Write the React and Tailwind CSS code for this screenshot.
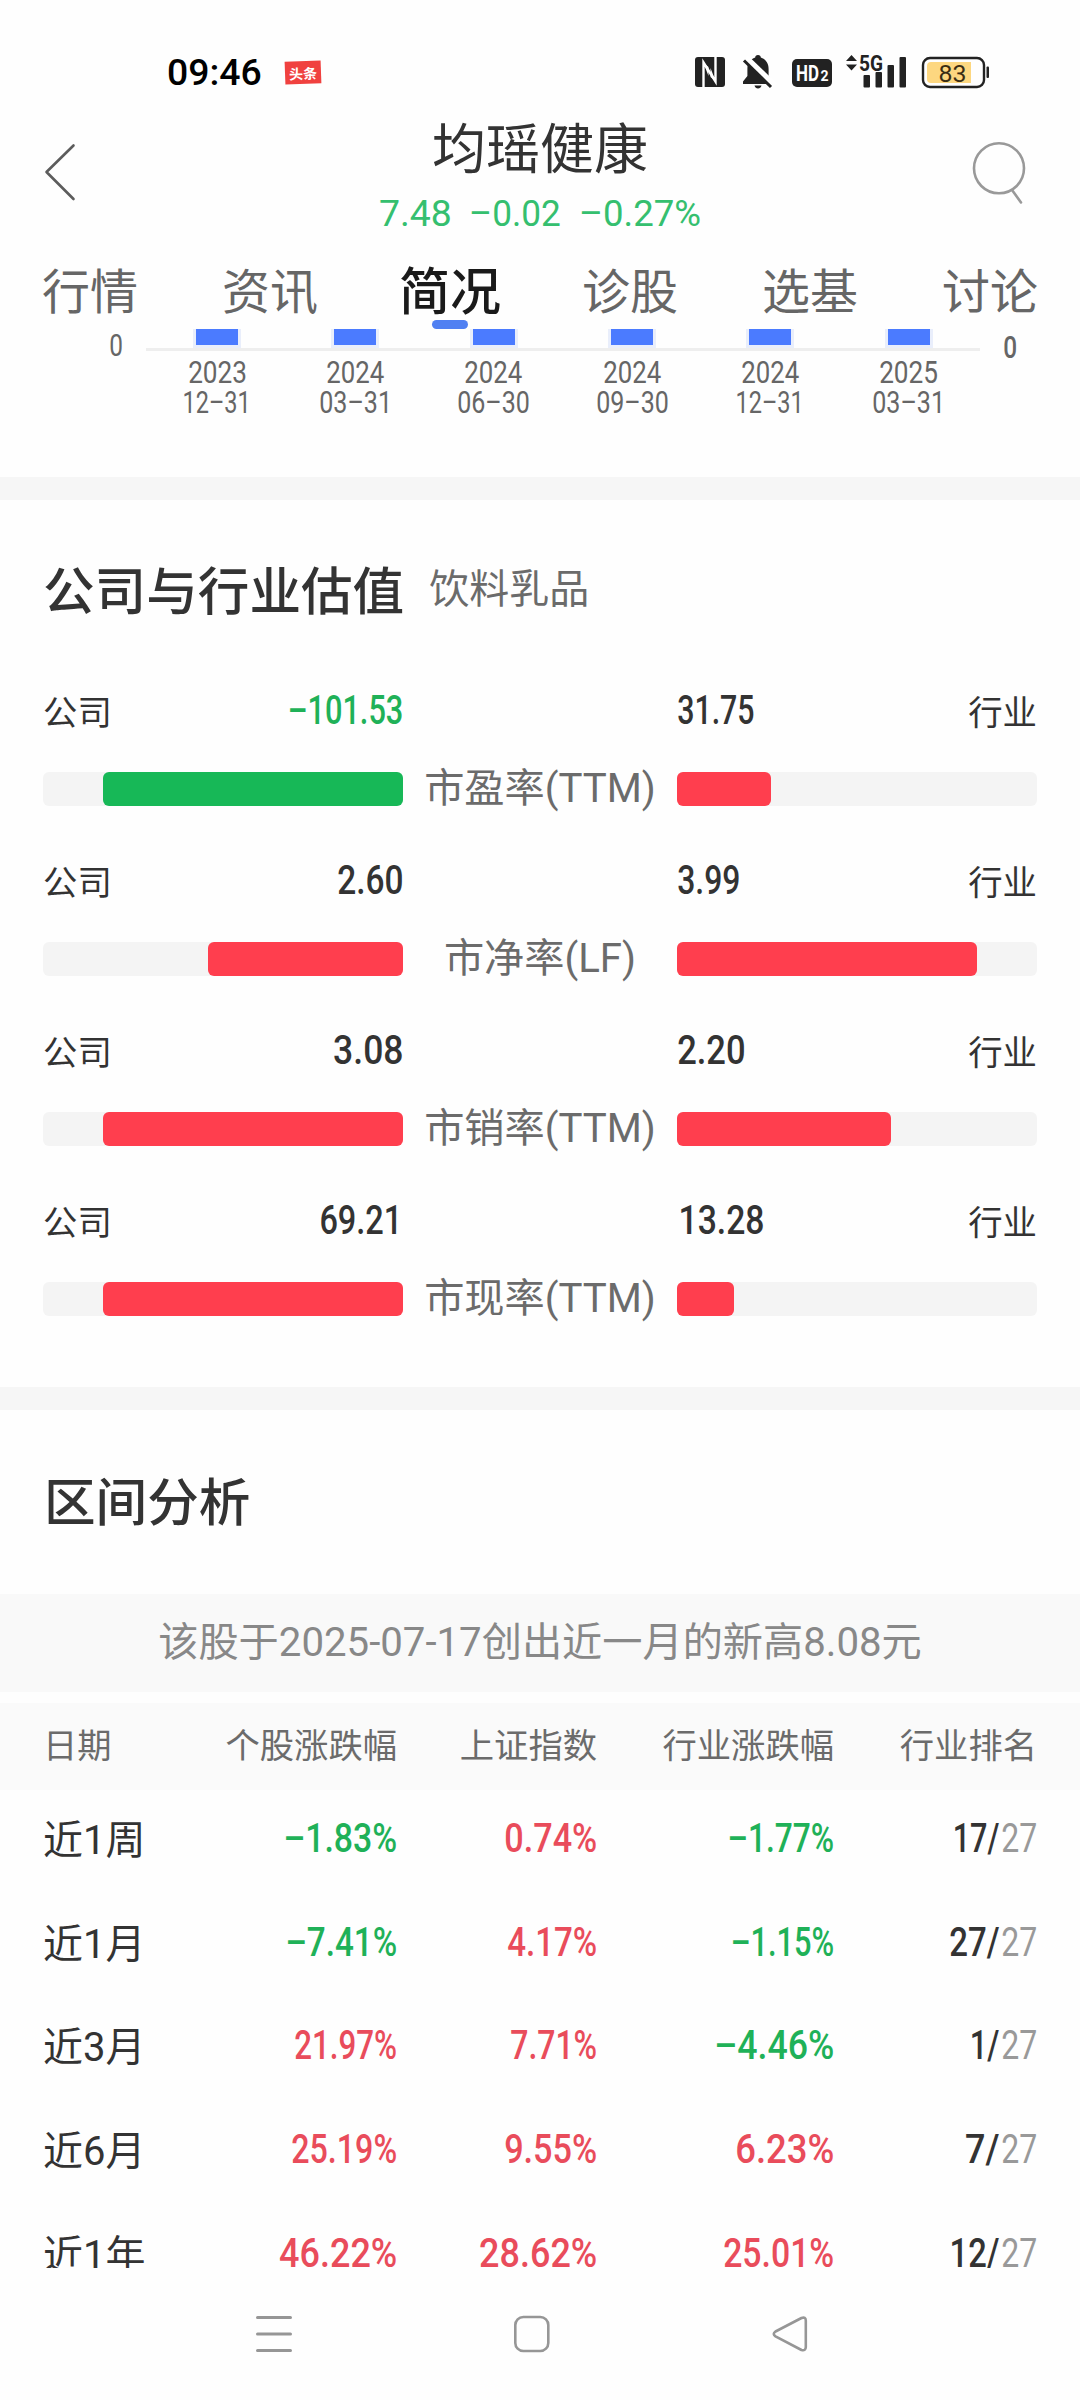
import { useLayoutEffect, useRef, useState } from "react";

const GREEN = "text-[#1fb158]";
const RED = "text-[#e94c5b]";

// Condensed figure text: squeezes a run of Roboto so that its ink fills exactly `w` pixels.
function Num({ w, children, className = "" }) {
  const ref = useRef(null);
  const [fit, setFit] = useState({ s: 1, x: 0 });
  useLayoutEffect(() => {
    const cs = getComputedStyle(ref.current);
    const ctx = document.createElement("canvas").getContext("2d");
    ctx.font = `${cs.fontWeight} ${cs.fontSize} ${cs.fontFamily}`;
    const m = ctx.measureText(children);
    const s = w / (m.actualBoundingBoxRight + m.actualBoundingBoxLeft);
    setFit({ s, x: m.actualBoundingBoxLeft * s });
  }, [w, children]);
  return (
    <span className={`inline-block align-top whitespace-nowrap font-[Roboto,sans-serif] ${className}`} style={{ width: w }}>
      <span
        ref={ref}
        className="block w-max origin-left"
        style={{ transform: `translateX(${fit.x}px) scaleX(${fit.s})` }}
      >
        {children}
      </span>
    </span>
  );
}

function StatusBar() {
  return (
    <div className="flex h-[100px] items-start pt-[50px] pl-[168px]">
      <Num w={93} className="text-[36.5px] leading-[45px] font-medium text-black">09:46</Num>
      <div className="mt-[11px] ml-[24px] flex h-[23px] w-[36px] -rotate-2 items-center justify-center bg-[#f0413f] text-[14px] leading-none font-bold text-white">
        头条
      </div>
      <svg className="ml-[370px] shrink-0" width="300" height="44" viewBox="691 50 300 44" fill="#222">
        <rect x="695" y="57" width="30" height="30" rx="3" />
        <path d="M703.500 87V62.500L715.500 81.500V57" fill="none" stroke="#fff" strokeWidth="2.400" />
        <path d="M703.500 63l5 4v9zM715.500 81l-5-4v-9z" fill="#fff" />
        <path d="M758 55c1.800 0 2.800 1.200 2.800 2.600 5 1.600 7.800 5.800 7.800 11.400v7l4.400 5.500v2.500h-30v-2.500l4.400-5.500v-7c0-5.600 2.800-9.800 7.800-11.400 0-1.400 1-2.600 2.800-2.600z" />
        <path d="M754.500 85.500h7c-.5 2-1.800 3-3.500 3s-3-1-3.500-3z" />
        <path d="M745.500 58L774.500 86" stroke="#fff" strokeWidth="7" />
        <path d="M744 60.500L771 87" stroke="#222" strokeWidth="3" />
        <rect x="792" y="59" width="40" height="28" rx="5" />
        <text x="796" y="81" fill="#fff" fontFamily="Roboto" fontWeight="700" fontSize="22" textLength="23" lengthAdjust="spacingAndGlyphs">HD</text>
        <text x="820.500" y="81" fill="#fff" fontFamily="Roboto" fontWeight="700" fontSize="14">2</text>
        <path d="M851.500 55l5.500 6h-11zM851.500 70.500l5.500-6h-11z" />
        <text x="859" y="70.500" fontFamily="Roboto" fontWeight="700" fontSize="21.500" textLength="24" lengthAdjust="spacingAndGlyphs">5G</text>
        <rect x="863.500" y="75" width="6.500" height="12.500" rx="1" />
        <rect x="875.500" y="72" width="6.500" height="15.500" rx="1" />
        <rect x="887.500" y="65" width="6.500" height="22.500" rx="1" />
        <rect x="899.500" y="57" width="6.500" height="30.500" rx="1" />
        <rect x="923" y="58" width="61" height="29" rx="7" fill="none" stroke="#222" strokeWidth="2.400" />
        <path d="M931 62h40v21h-40a4 4 0 0 1-4-4V66a4 4 0 0 1 4-4z" fill="#fdd780" />
        <rect x="986.500" y="66.500" width="2.500" height="11.500" rx="1" />
        <text x="938.500" y="81.500" fill="#3a2d14" fontFamily="Roboto" fontSize="24.500" textLength="28" lengthAdjust="spacingAndGlyphs">83</text>
      </svg>
    </div>
  );
}

function Header() {
  return (
    <header className="grid h-[150px] grid-cols-[1fr_auto_1fr] items-start pr-[52px] pl-[40px]">
      <svg className="mt-[40px]" width="64" height="64" viewBox="40 140 64 64" fill="none">
        <path d="M73.500 145.500L46.500 172L73.500 199" stroke="#5c5c5c" strokeWidth="2.600" strokeLinecap="round" strokeLinejoin="round" />
      </svg>
      <div className="mt-[18px] ml-[12px] flex flex-col items-center">
        <h1 className="text-[54px] leading-[56px] text-[#333]">均瑶健康</h1>
        <div className="mt-[16px] flex gap-[21px] text-[37px] leading-[48px] text-[#35bf6f]">
          <Num w={70}>7.48</Num>
          <Num w={89}>–0.02</Num>
          <Num w={119}>–0.27%</Num>
        </div>
      </div>
      <svg className="mt-[36px] justify-self-end" width="60" height="74" viewBox="968 136 60 74" fill="none" stroke="#999" strokeWidth="2.600">
        <circle cx="999" cy="168.300" r="25" />
        <path d="M1012 190L1021 202.500" strokeLinecap="round" />
      </svg>
    </header>
  );
}

const TABS = ["行情", "资讯", "简况", "诊股", "选基", "讨论"];

function Tabs() {
  return (
    <nav className="flex h-[79px] justify-between px-[42px]">
      {TABS.map((t) => (
        <div key={t} className="relative flex w-[96px] justify-center">
          {t === "简况" ? (
            <>
              <span className="text-[51px] leading-[76px] font-medium whitespace-nowrap text-[#1a1a1a]">{t}</span>
              <span className="absolute bottom-0 h-[9px] w-[36px] rounded-full bg-[#5080f2]" />
            </>
          ) : (
            <span className="text-[48px] leading-[77px] whitespace-nowrap text-[#666]">{t}</span>
          )}
        </div>
      ))}
    </nav>
  );
}

const QUARTERS = [
  ["2023", "12–31", 62],
  ["2024", "03–31", 67],
  ["2024", "06–30", 71],
  ["2024", "09–30", 71],
  ["2024", "12–31", 62],
  ["2025", "03–31", 67],
];

function Chart() {
  return (
    <section className="flex h-[148px] text-[30.5px] text-[#666]">
      <div className="flex w-[146px] justify-end pt-[2px] pr-[24px]">
        <Num w={12} className="leading-[30px]">0</Num>
      </div>
      <div className="w-[834px]">
        <div className="grid w-[830px] translate-x-[2px] grid-cols-6 justify-items-center">
          {QUARTERS.map((q, i) => (
            <div key={i} className="h-[19px] border-x-[3px] border-b-[3px] border-[#e9eefb] bg-[#4b7bff]">
              <div className="w-[42px]" />
            </div>
          ))}
        </div>
        <div className="h-[3px] bg-[#eee]" />
        <div className="mt-[7px] grid w-[830px] translate-x-[2px] grid-cols-6 leading-[30px]">
          {QUARTERS.map(([y, d, w], i) => (
            <div key={i} className="flex flex-col items-center">
              <Num w={57}>{y}</Num>
              <div className={d.endsWith("1") ? "pr-[4px]" : ""}>
                <Num w={w}>{d}</Num>
              </div>
            </div>
          ))}
        </div>
      </div>
      <div className="pt-[4px] pl-[24px] leading-[30px]">
        <Num w={12} className="font-medium">0</Num>
      </div>
    </section>
  );
}

const VALUATION = [
  { name: "市盈率(TTM)", a: "–101.53", aw: 112, afill: 300, neg: true, b: "31.75", bw: 76, bfill: 94 },
  { name: "市净率(LF)", a: "2.60", aw: 64, afill: 195, b: "3.99", bw: 61, bfill: 300 },
  { name: "市销率(TTM)", a: "3.08", aw: 68, afill: 300, b: "2.20", bw: 66, bfill: 214 },
  { name: "市现率(TTM)", a: "69.21", aw: 75, afill: 300, b: "13.28", bw: 82, bfill: 57, nudge: true },
];

function Valuation() {
  return (
    <section className="h-[887px] px-[43px] pt-[56px]">
      <div className="flex items-center">
        <h2 className="text-[51.6px] leading-[64px] font-medium whitespace-nowrap text-[#333]">公司与行业估值</h2>
        <span className="mb-[4px] ml-[25px] text-[40px] leading-[60px] text-[#6b6b6b]">饮料乳品</span>
      </div>
      <div className="mt-[66px]">
        {VALUATION.map((v) => (
          <div key={v.name} className="h-[170px]">
            <div className="flex h-[48px] items-center text-[#333]">
              <div className="flex w-[360px] items-center justify-between">
                <span className="text-[34.4px] leading-[48px]">公司</span>
                <Num
                  w={v.aw}
                  className={`text-[40px] leading-[45px] font-medium ${v.neg ? "text-[#1fb158]" : ""} ${v.nudge ? "mr-[7px]" : "mr-[1px]"}`}
                >
                  {v.a}
                </Num>
              </div>
              <div className="ml-[274px] flex w-[360px] items-center justify-between">
                <Num w={v.bw} className={`text-[40px] leading-[45px] font-medium ${v.nudge ? "ml-[4px]" : "ml-[1px]"}`}>
                  {v.b}
                </Num>
                <span className="text-[34.4px] leading-[48px]">行业</span>
              </div>
            </div>
            <div className="mt-[38px] flex h-[34px] items-center">
              <div className="flex h-[34px] w-[360px] justify-end rounded-[6px] bg-[#f4f4f4]">
                <div className={`rounded-[6px] ${v.neg ? "bg-[#17b857]" : "bg-[#ff3e4e]"}`} style={{ width: v.afill }} />
              </div>
              <div className="w-[274px] text-center font-[Roboto,'Noto_Sans_CJK_SC',sans-serif] text-[40.2px] leading-[34px] whitespace-nowrap text-[#6b6b6b]">
                {v.name}
              </div>
              <div className="flex h-[34px] w-[360px] rounded-[6px] bg-[#f4f4f4]">
                <div className="rounded-[6px] bg-[#ff3e4e]" style={{ width: v.bfill }} />
              </div>
            </div>
          </div>
        ))}
      </div>
    </section>
  );
}

const PERIODS = [
  ["近1周", ["–1.83%", 110], ["0.74%", 90], ["–1.77%", 103], ["17/", 44]],
  ["近1月", ["–7.41%", 108], ["4.17%", 88], ["–1.15%", 100], ["27/", 49]],
  ["近3月", ["21.97%", 101], ["7.71%", 85], ["–4.46%", 116], ["1/", 27]],
  ["近6月", ["25.19%", 104], ["9.55%", 91], ["6.23%", 96], ["7/", 33]],
  ["近1年", ["46.22%", 116], ["28.62%", 116], ["25.01%", 109], ["12/", 47]],
];

function Change({ value: [text, w] }) {
  return (
    <div className={`text-right ${text.startsWith("–") ? GREEN : RED}`}>
      <Num w={w}>{text}</Num>
    </div>
  );
}

function Periods() {
  return (
    <section className="h-[858px] overflow-hidden">
      <h2 className="ml-[44px] pt-[57px] text-[51.6px] leading-[64px] font-medium text-[#333]">区间分析</h2>
      <div className="mt-[63px] h-[98px] bg-[#f9f9f9] text-center font-[Roboto,'Noto_Sans_CJK_SC',sans-serif] text-[40.2px] leading-[98px] text-[#888]">
        该股于2025-07-17创出近一月的新高8.08元
      </div>
      <div className="mt-[11px] grid h-[87px] grid-cols-[154px_200px_200px_237px_203px] bg-[#fafafa] pl-[43px] text-right text-[34.3px] leading-[80px] text-[#6b6b6b]">
        <span className="text-left">日期</span>
        <span>个股涨跌幅</span>
        <span>上证指数</span>
        <span>行业涨跌幅</span>
        <span>行业排名</span>
      </div>
      <div className="-mt-[3px]">
        {PERIODS.map(([name, stock, index, industry, [rank, rw]]) => (
          <div
            key={name}
            className="grid h-[103.75px] grid-cols-[154px_199px_199.5px_237.5px_203px] items-center pl-[43px] text-[40px] leading-[48px] font-medium"
          >
            <span className="pt-[4px] font-[Roboto,'Noto_Sans_CJK_SC',sans-serif] font-normal text-[#333]">{name}</span>
            <Change value={stock} />
            <Change value={index} />
            <Change value={industry} />
            <div className="flex justify-end gap-[3px] text-[#333]">
              <Num w={rw}>{rank}</Num>
              <Num w={34} className="font-normal text-[#999]">27</Num>
            </div>
          </div>
        ))}
      </div>
    </section>
  );
}

function SystemNav() {
  return (
    <div className="flex h-[132px] items-start pt-[42px] pl-[250px]">
      <svg width="48" height="48" viewBox="250 2310 48 48" stroke="#969696" strokeWidth="3" strokeLinecap="round">
        <path d="M257.500 2317.500H290.500M257.500 2334H290.500M257.500 2350.500H290.500" />
      </svg>
      <svg className="ml-[210px]" width="48" height="48" viewBox="508 2310 48 48" fill="none" stroke="#969696" strokeWidth="2.600">
        <rect x="515.300" y="2317" width="33" height="34" rx="8" />
      </svg>
      <svg className="ml-[210px]" width="48" height="48" viewBox="766 2310 48 48" fill="none" stroke="#969696" strokeWidth="2.600" strokeLinejoin="round">
        <path d="M775.500 2331.500Q772 2334 775.500 2336.300L801.500 2350Q805.800 2351 805.800 2347V2320.500Q805.800 2316.500 801.500 2318Z" />
      </svg>
    </div>
  );
}

export default function App() {
  return (
    <div className="h-[2400px] w-[1080px] overflow-hidden bg-[#fefefe] font-['Noto_Sans_CJK_SC',sans-serif]">
      <StatusBar />
      <Header />
      <Tabs />
      <Chart />
      <div className="h-[23px] bg-[#f6f6f6]" />
      <Valuation />
      <div className="h-[23px] bg-[#f6f6f6]" />
      <Periods />
      <SystemNav />
    </div>
  );
}
